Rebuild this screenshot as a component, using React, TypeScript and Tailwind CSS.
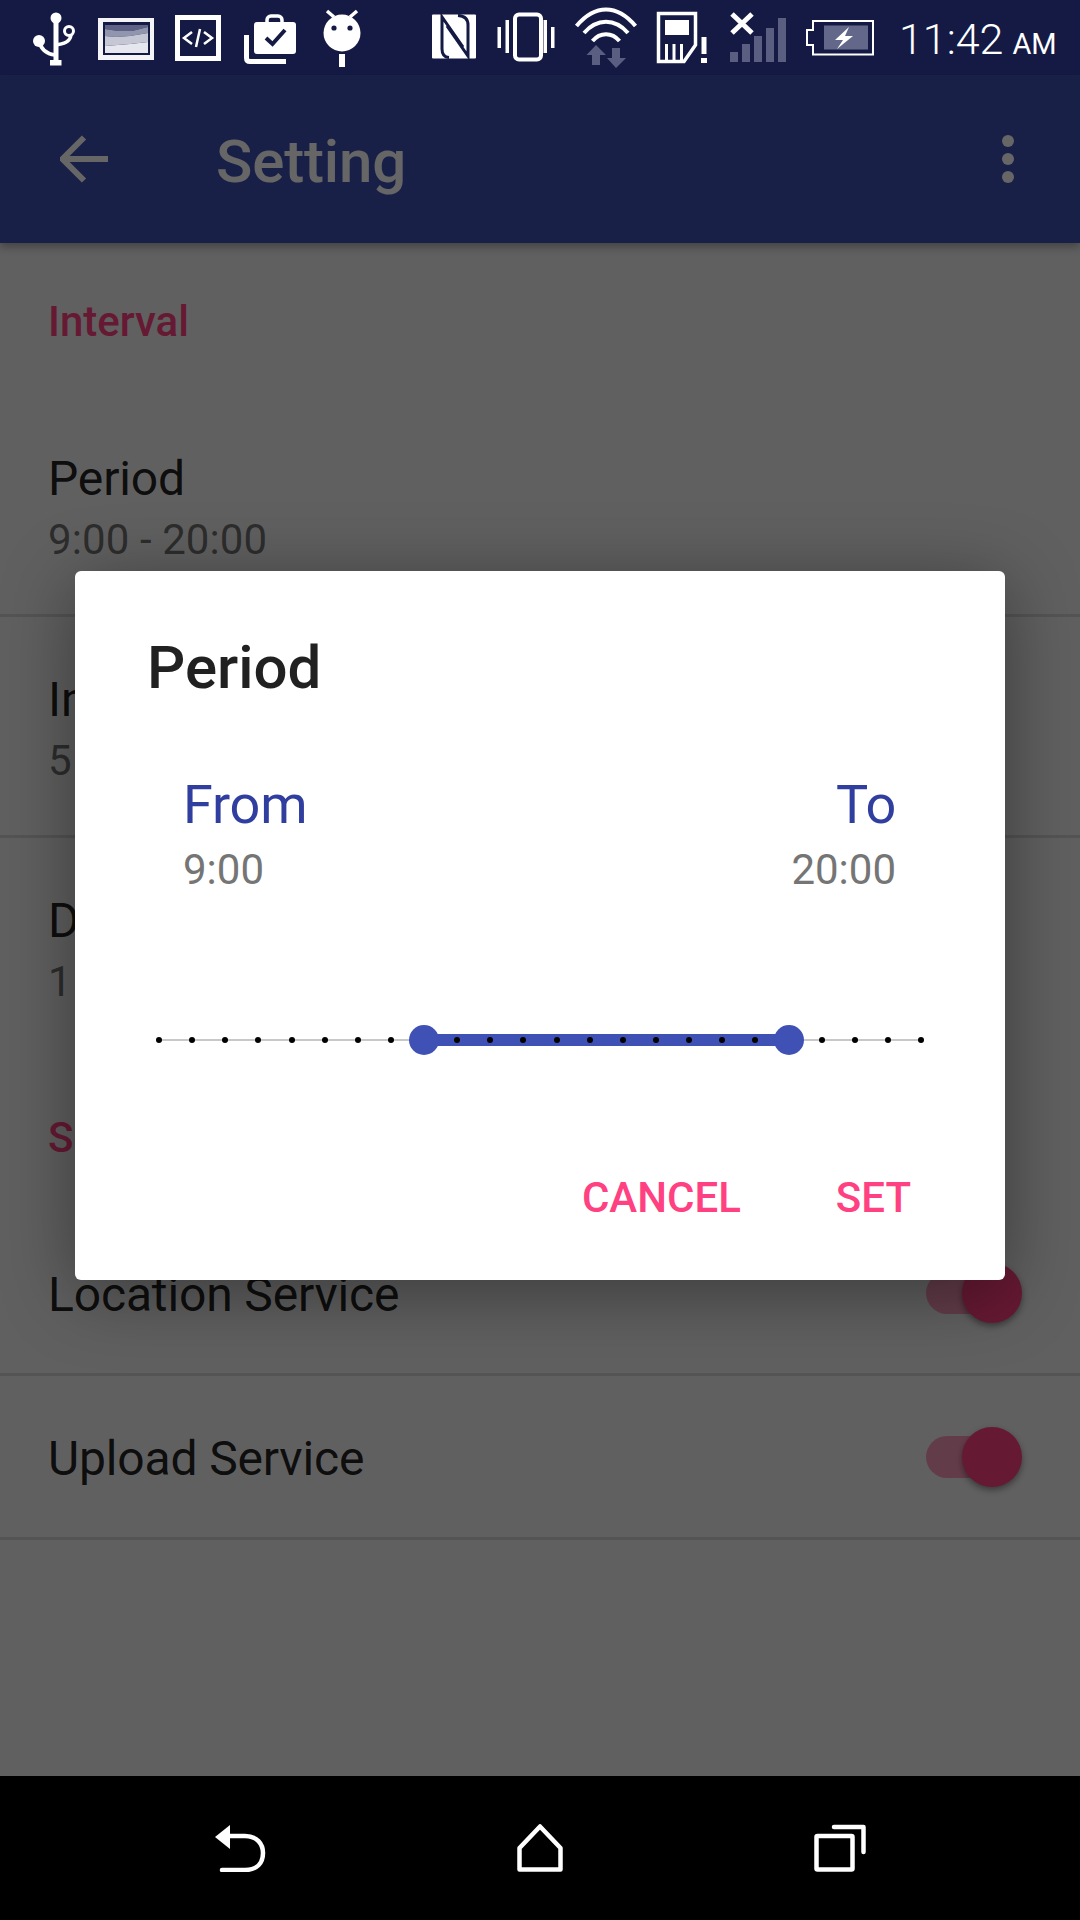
import React from 'react'

const font = { fontFamily: 'Roboto, "Noto Sans", sans-serif' }

// status icons are drawn in screen coordinates, x0 is the left edge of the box
function StatusIcon({ x0, w, ml, children }: { x0: number; w: number; ml: number; children: React.ReactNode }) {
  return (
    <svg width={w} height={75} viewBox={`${x0} 0 ${w} 75`} style={{ marginLeft: ml }} className="shrink-0">
      {children}
    </svg>
  )
}

const DARK = '#141a44'
const DIM = '#5a5f82'

function StatusBar() {
  return (
    <div className="flex h-[75px] shrink-0 items-start bg-[#141a44]">
      <StatusIcon x0={30} w={50} ml={30}>
        <circle cx="56" cy="18" r="5.5" fill="#fff" />
        <rect x="53.5" y="18" width="5" height="44" fill="#fff" />
        <rect x="50" y="60" width="11.5" height="5.5" fill="#fff" />
        <circle cx="39" cy="41" r="6" fill="#fff" />
        <path d="M39 41 C41 50 47 54 55 55" fill="none" stroke="#fff" strokeWidth="3.5" />
        <circle cx="69" cy="31" r="4.5" fill="none" stroke="#fff" strokeWidth="3" />
        <path d="M71 35 C70 42 64 44 55 45" fill="none" stroke="#fff" strokeWidth="3.5" />
      </StatusIcon>
      <StatusIcon x0={96} w={60} ml={16}>
        <rect x="98" y="18" width="56" height="42" fill="#f4f4f6" />
        <rect x="103" y="22" width="47" height="33" fill={DARK} />
        <path d="M105 25 H148 V27 L132 31 L118 31 L105 29Z" fill="#5e6386" />
        <path d="M105 29 L118 31 L132 31 L148 27 V33 L130 36 L116 37 L105 36Z" fill="#9195ae" />
        <path d="M105 36 L116 37 L130 36 L148 33 V42 L130 44 L105 46Z" fill="#c5c7d5" />
        <path d="M105 46 L130 44 L148 42 V53 H105Z" fill="#e6e6ee" />
      </StatusIcon>
      <StatusIcon x0={173} w={50} ml={17}>
        <rect x="177.5" y="17.5" width="41" height="41" fill="none" stroke="#fff" strokeWidth="5" />
        <path d="M192 32 L184 38 L192 44 M196 47 L200 29 M204 32 L212 38 L204 44" fill="none" stroke="#fff" strokeWidth="2.5" />
      </StatusIcon>
      <StatusIcon x0={242} w={56} ml={19}>
        <path d="M246.5 35 V58 Q246.5 61.5 250 61.5 H286" fill="none" stroke="#fff" strokeWidth="5" />
        <rect x="254" y="22" width="42" height="32" rx="3" fill="#fff" />
        <rect x="267" y="16" width="15" height="10" rx="4" fill="none" stroke="#fff" strokeWidth="3.5" />
        <path d="M266 38 L272.5 44 L285 30" fill="none" stroke={DARK} strokeWidth="4" />
      </StatusIcon>
      <StatusIcon x0={322} w={40} ml={24}>
        <circle cx="342" cy="33" r="18.5" fill="#fff" />
        <path d="M327 11 L334 17 M357 11 L350 17" stroke="#fff" strokeWidth="3.5" />
        <circle cx="334" cy="28" r="2.6" fill={DARK} />
        <circle cx="350" cy="28" r="2.6" fill={DARK} />
        <rect x="339" y="54" width="6" height="13" fill="#fff" />
      </StatusIcon>
      <StatusIcon x0={430} w={48} ml={68}>
        <rect x="432" y="14.5" width="44" height="44" rx="1" fill="#fff" />
        <path d="M449 57.5 Q442 57 442 49 V17 L463 47" fill="none" stroke={DARK} strokeWidth="3" strokeLinejoin="miter" />
        <path d="M458 15.5 Q468 16 468 25 V56 L447 26" fill="none" stroke={DARK} strokeWidth="3" strokeLinejoin="miter" />
      </StatusIcon>
      <StatusIcon x0={496} w={60} ml={18}>
        <rect x="497.5" y="27" width="3.5" height="21" fill="#fff" />
        <rect x="505.5" y="20" width="3.5" height="33" fill="#fff" />
        <rect x="515" y="14.5" width="26" height="45" rx="4" fill="none" stroke="#fff" strokeWidth="4" />
        <rect x="543.5" y="20" width="3.5" height="33" fill="#fff" />
        <rect x="551" y="27" width="3.5" height="21" fill="#fff" />
      </StatusIcon>
      <StatusIcon x0={572} w={68} ml={16}>
        <path d="M576.5 26 C595 4 617 4 635.5 26" fill="none" stroke="#fff" strokeWidth="4" />
        <path d="M584 33 C597 18 615 18 628 33" fill="none" stroke="#fff" strokeWidth="4" />
        <path d="M592.5 41 C600 32 612 32 619.5 41" fill="none" stroke="#fff" strokeWidth="4" />
        <path d="M596 45 L606 55 H600 V65 H592 V55 H586.5Z" fill={DIM} />
        <path d="M612 48 H620 V58 H626 L616 68 L607 58 H612Z" fill={DIM} />
      </StatusIcon>
      <StatusIcon x0={655} w={54} ml={15}>
        <path d="M658.5 13.5 H695.5 V45 L684 61.5 H658.5Z" fill="none" stroke="#fff" strokeWidth="3.5" />
        <rect x="665" y="20" width="24" height="15" fill="#fff" />
        <path d="M666.5 44 V60 M674 44 V60 M681.5 44 V60" stroke="#fff" strokeWidth="3" />
        <rect x="701.5" y="37" width="5" height="17" fill="#fff" />
        <rect x="701" y="58" width="6" height="5" fill="#fff" />
      </StatusIcon>
      <StatusIcon x0={728} w={60} ml={19}>
        <path d="M732 14 L752 33 M752 14 L732 33" stroke="#fff" strokeWidth="5" />
        <rect x="730" y="52" width="8" height="10" fill={DIM} />
        <rect x="742" y="44" width="8" height="18" fill={DIM} />
        <rect x="754" y="36" width="8" height="26" fill={DIM} />
        <rect x="766" y="28" width="8" height="34" fill={DIM} />
        <rect x="778" y="18" width="8" height="44" fill={DIM} />
      </StatusIcon>
      <StatusIcon x0={804} w={72} ml={16}>
        <path d="M813 21 H873 V54.5 H813 V45 H807 V30 H813Z" fill="none" stroke="#fff" strokeWidth="2" />
        <rect x="824" y="25.5" width="44" height="24" fill="#63688a" />
        <path d="M849 27 L835 40 H843 L837 49 L853 36 H845Z" fill="#fff" />
      </StatusIcon>
      <div className="ml-[23px] mt-[14px] flex items-baseline text-white" style={font}>
        <span className="text-[43px] leading-[50px] font-light">11:42</span>
        <span className="ml-[9px] text-[29px] leading-[50px]">AM</span>
      </div>
    </div>
  )
}

function Toolbar() {
  return (
    <div className="relative flex h-[168px] shrink-0 items-center bg-[#3f51b5] shadow-[0_4px_8px_rgba(0,0,0,0.3)]">
      <svg width="48" height="48" viewBox="0 0 48 48" className="ml-[60px]">
        <path d="M48 24 H4 M24 2.5 L2.5 24 L24 45.5" fill="none" stroke="#fff" strokeWidth="6" />
      </svg>
      <span className="ml-[108px] mt-[5px] text-[60px] font-medium tracking-[-0.15px] text-white">Setting</span>
      <svg width="12" height="48" viewBox="0 0 12 48" className="ml-auto mr-[66px]">
        <circle cx="6" cy="6" r="6" fill="#fff" />
        <circle cx="6" cy="24" r="6" fill="#fff" />
        <circle cx="6" cy="42" r="6" fill="#fff" />
      </svg>
    </div>
  )
}

function SectionHeader({ title }: { title: string }) {
  return (
    <div className="flex h-[153px] items-start pl-[48px] pt-[54px]">
      <span className="text-[42px] leading-[50px] font-medium text-[#ff4081]">{title}</span>
    </div>
  )
}

function PrefRow({ title, value, divider = true }: { title: string; value: string; divider?: boolean }) {
  return (
    <div className={`flex h-[221px] flex-col pl-[48px] pt-[49px] ${divider ? 'border-b-[3px] border-black/12' : ''}`}>
      <span className="text-[48px] leading-[68px] tracking-[-0.15px] text-black/87">{title}</span>
      <span className="mt-[1px] text-[42px] leading-[52px] tracking-[0.1px] text-black/55">{value}</span>
    </div>
  )
}

function SwitchRow({ title }: { title: string }) {
  return (
    <div className="flex h-[164px] items-center justify-between border-b-[3px] border-black/12 pl-[48px] pr-[80px]">
      <span className="mt-[4px] text-[48px] tracking-[-0.15px] text-black/87">{title}</span>
      <div className="relative h-[42px] w-[74px] rounded-full bg-[#ff4081]/50">
        <div className="absolute left-[36px] top-[-9px] size-[60px] rounded-full bg-[#ff4081] shadow-[0_3px_6px_rgba(0,0,0,0.4)]" />
      </div>
    </div>
  )
}

function RangeSlider() {
  const dots = Array.from({ length: 24 }, (_, i) => i)
  return (
    <div className="relative ml-[81px] mt-[129px] flex h-[30px] w-[768px] items-center justify-between">
      <div className="absolute left-[3px] right-[3px] top-[14px] h-[2px] bg-[#c8c8c8]" />
      <div className="absolute left-[268px] top-[9px] h-[12px] w-[365px] bg-[#3f51b5]" />
      {dots.map((d) => (
        <div key={d} className="relative size-[6px] rounded-full bg-black" />
      ))}
      <div className="absolute left-[253px] top-0 size-[30px] rounded-full bg-[#3f51b5]" />
      <div className="absolute left-[618px] top-0 size-[30px] rounded-full bg-[#3f51b5]" />
    </div>
  )
}

function PeriodDialog() {
  return (
    <div className="h-[709px] w-[930px] rounded-[6px] bg-white shadow-[0_12px_72px_rgba(0,0,0,0.4)]">
      <div className="pl-[72px] pt-[62px] text-[60px] leading-[70px] font-medium text-[#212121]">Period</div>
      <div className="mt-[70px] flex justify-between pl-[108px] pr-[109px]">
        <div className="flex flex-col items-start">
          <span className="text-[54px] leading-[64px] tracking-[-0.2px] text-[#303f9f]">From</span>
          <span className="mt-[7px] text-[42px] leading-[52px] text-[#757575]">9:00</span>
        </div>
        <div className="flex flex-col items-end">
          <span className="text-[54px] leading-[64px] tracking-[-0.2px] text-[#303f9f]">To</span>
          <span className="mt-[7px] text-[42px] leading-[52px] text-[#757575]">20:00</span>
        </div>
      </div>
      <RangeSlider />
      <div className="mt-[118px] flex justify-end pr-[94px] text-[42px] leading-[50px] font-medium text-[#ff4081]">
        <span>CANCEL</span>
        <span className="ml-[95px]">SET</span>
      </div>
    </div>
  )
}

function NavBar() {
  return (
    <div className="flex h-[144px] shrink-0 items-center justify-center bg-black">
      <div className="flex w-[300px] justify-center">
        <svg width="54" height="48" viewBox="0 0 54 48">
          <path d="M2 13 L17 1 V25Z" fill="#fff" />
          <path d="M15 12 H32 C44 12 50 20 50 29 C50 39 44 46 32 46 H9" fill="none" stroke="#fff" strokeWidth="4.5" strokeLinecap="round" />
        </svg>
      </div>
      <div className="flex w-[300px] justify-center">
        <svg width="46" height="48" viewBox="0 0 46 48">
          <path d="M23 2.5 L43.5 24 V45.5 H2.5 V24Z" fill="none" stroke="#fff" strokeWidth="4.5" strokeLinejoin="round" />
        </svg>
      </div>
      <div className="flex w-[300px] justify-center">
        <svg width="52" height="48" viewBox="0 0 52 48">
          <rect x="2.5" y="12" width="36" height="33.5" rx="1" fill="none" stroke="#fff" strokeWidth="4.5" strokeLinejoin="round" />
          <path d="M20 3 H49.5 V28" fill="none" stroke="#fff" strokeWidth="4.5" strokeLinecap="round" strokeLinejoin="round" />
        </svg>
      </div>
    </div>
  )
}

export default function App() {
  return (
    <div className="flex h-[1920px] w-[1080px] flex-col overflow-hidden" style={font}>
      <StatusBar />
      <div className="relative flex min-h-0 flex-1 flex-col bg-[#efefef]">
        <Toolbar />
        <SectionHeader title="Interval" />
        <PrefRow title="Period" value="9:00 - 20:00" />
        <PrefRow title="Interval" value="5 min" />
        <PrefRow title="Duration" value="1 min" divider={false} />
        <SectionHeader title="Service" />
        <SwitchRow title="Location Service" />
        <SwitchRow title="Upload Service" />
        <div className="absolute inset-0 flex items-center justify-center bg-black/60">
          <PeriodDialog />
        </div>
      </div>
      <NavBar />
    </div>
  )
}
